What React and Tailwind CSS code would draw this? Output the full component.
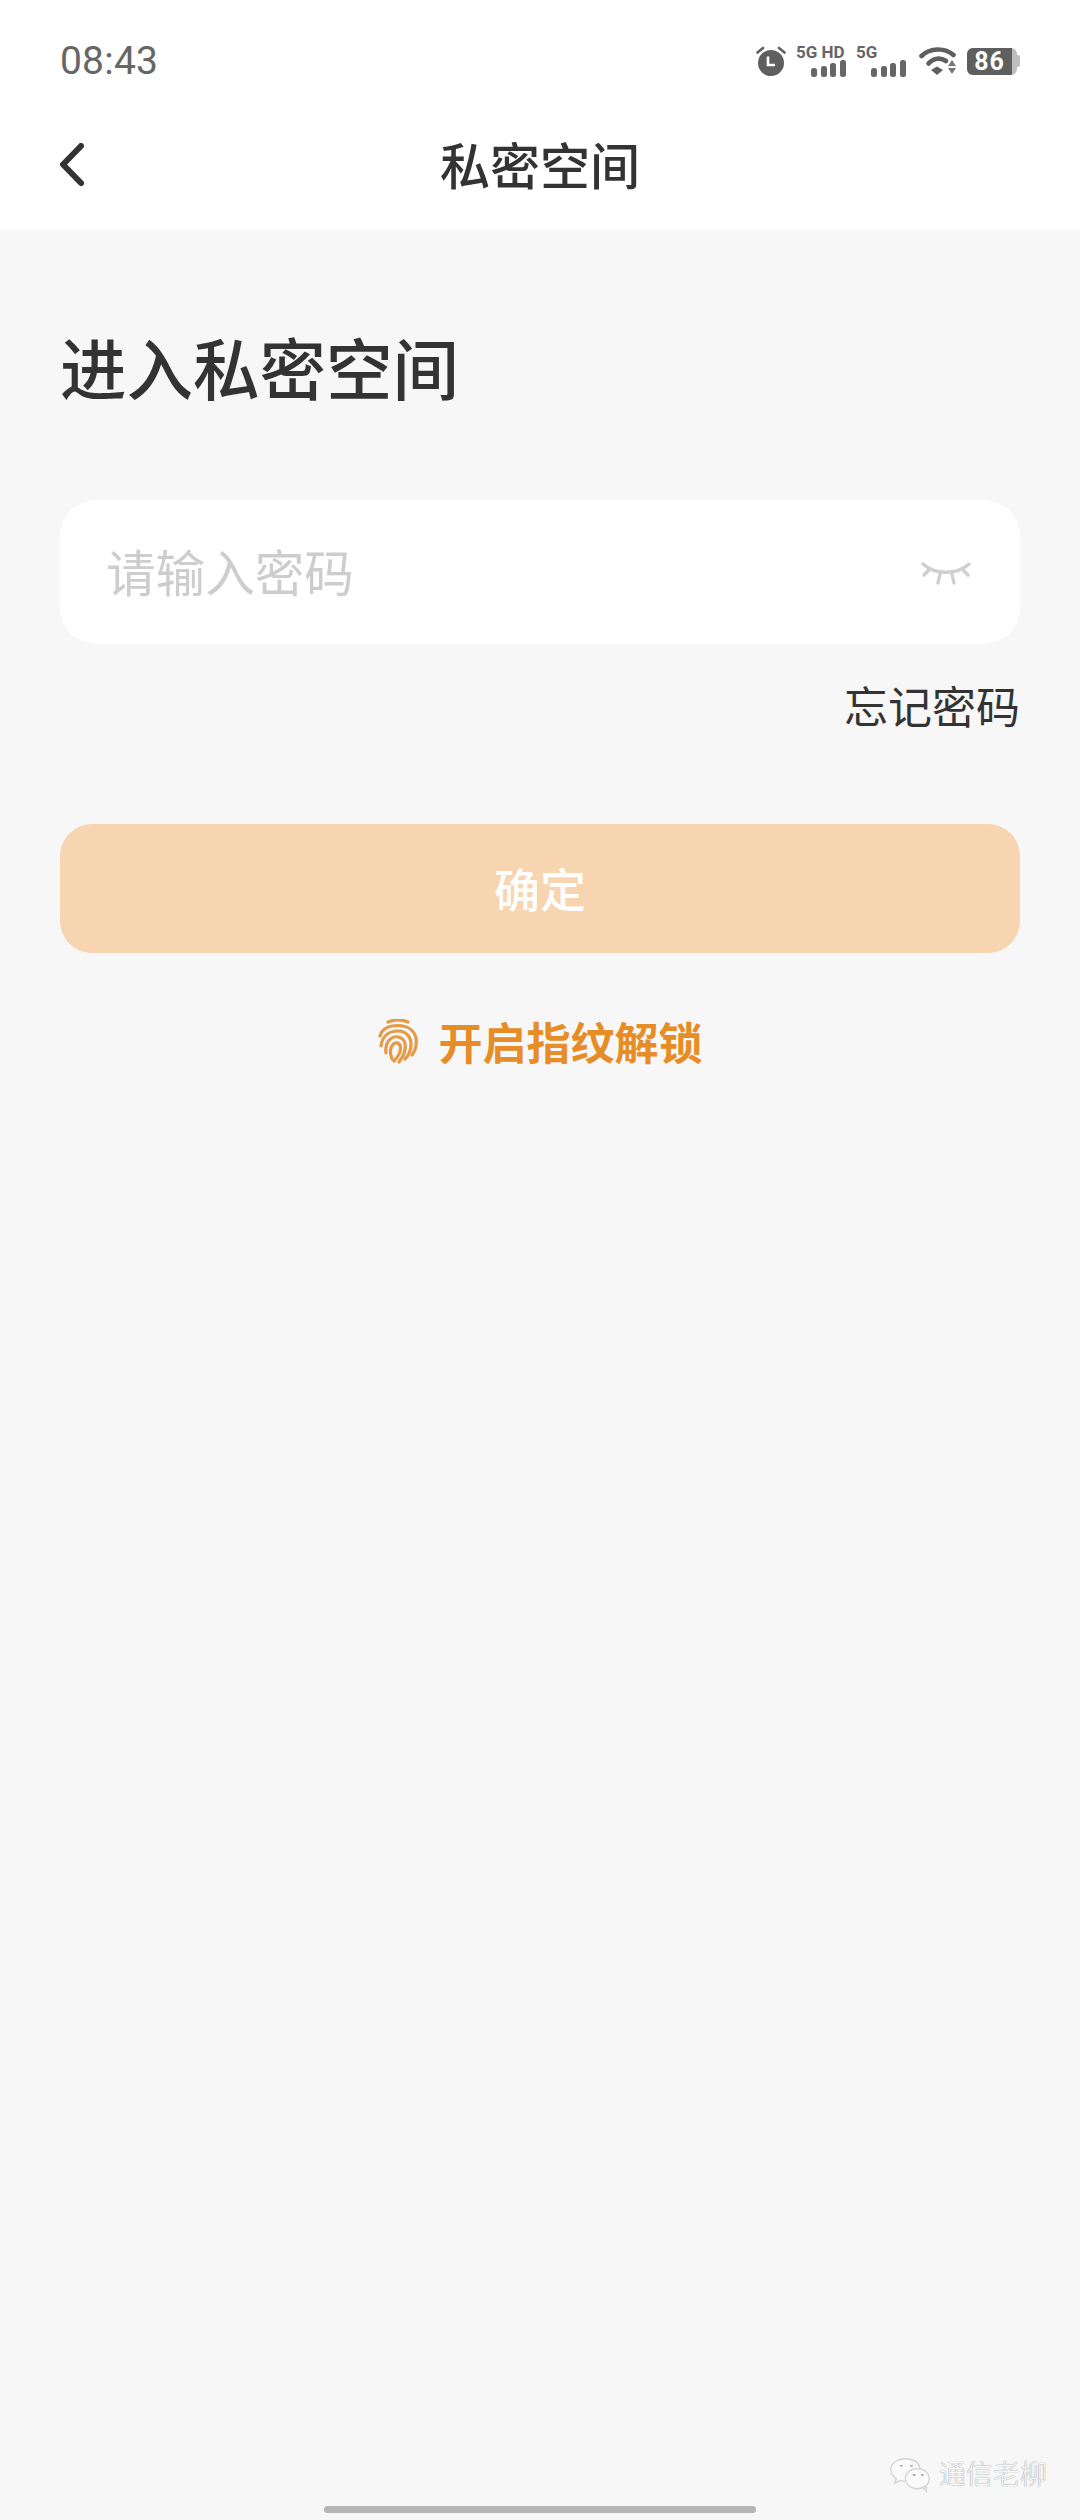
import React from "react";

const CJK = "font-['Roboto','Noto_Sans_CJK_SC',sans-serif]";

const AlarmIcon = () => (
    <svg width="30" height="32" viewBox="0 0 30 32" fill="none">
        <circle cx="15" cy="18" r="13" fill="#5f5f5f" />
        <path d="M12 11.5V20H19" stroke="#fff" strokeWidth="2.6" />
        <path d="M1.5 7.5L7 3M28.5 7.5L23 3" stroke="#5f5f5f" strokeWidth="2.6" strokeLinecap="round" />
    </svg>
);

const SignalBars = () => (
    <svg width="35" height="17" viewBox="0 0 35 17" fill="#666">
        <rect x="0" y="8" width="6" height="9" rx="2.5" />
        <rect x="10" y="6" width="6" height="11" rx="2.5" />
        <rect x="19" y="3" width="6" height="14" rx="2.5" />
        <rect x="29" y="0" width="6" height="17" rx="2.5" />
    </svg>
);

const WifiIcon = () => (
    <svg width="38" height="30" viewBox="0 0 38 30" fill="none">
        <path d="M2.5 10C11 1.5 26 1.5 34.5 9" stroke="#5f5f5f" strokeWidth="4.6" strokeLinecap="round" />
        <path d="M9.5 17.5C14.5 11.5 22 11.5 27 15" stroke="#5f5f5f" strokeWidth="4.6" strokeLinecap="round" />
        <path d="M12 24L18 20.5L24 24L18 29Z" fill="#5f5f5f" />
        <path d="M33 14L37 20H29Z M29 22H37L33 28Z" fill="#777" />
    </svg>
);

const Battery = () => (
    <div className="flex items-center">
        <div className="flex h-[27px] w-[50px] items-center rounded-[6px] bg-[#bdbdbd]">
            <div className="flex h-full w-[45px] items-center justify-center rounded-l-[6px] bg-[#5f5f5f] font-['Roboto',sans-serif] text-[25px] leading-none font-bold tracking-[1px] text-white">
                86
            </div>
        </div>
        <div className="h-[12px] w-[3px] rounded-r-[2px] bg-[#bdbdbd]" />
    </div>
);

const EyeClosed = () => (
    <svg width="50" height="24" viewBox="0 0 50 24" fill="none" stroke="#cfcfcf" strokeWidth="3.4" strokeLinecap="round">
        <path d="M2 2C14 13 36 13 48 2" />
        <path d="M8 8L3 13M19 12L17 21M31 12L33 21M42 8L47 13" />
    </svg>
);

const Fingerprint = () => (
    <svg width="40" height="46" viewBox="0 0 40 46" fill="none" stroke="#e69a45" strokeWidth="3.2" strokeLinecap="round">
        <path d="M10 3C16 0.5 24 0.5 30 3" />
        <path d="M2 17C4 10 11 6.5 20 6.5C29 6.5 36 11 38 19C39 26 37 32 34 36" />
        <path d="M3 27C4 18 10 12 20 12C28 12 33 18 33 25C33 31 31 36 27 40" />
        <path d="M8 34C7 28 9 22 13 19.5C18 16 25 18 27 24C28.5 31 25 38 21 43" />
        <path d="M14 40C12 35 12 29 15 25.5C18 22.5 22 24 22.5 28C23 33 20 38 16 42" />
    </svg>
);

const WechatMark = () => (
    <svg width="42" height="38" viewBox="0 0 46 40" fill="none" stroke="#d4d4d4" strokeWidth="1.5">
        <path d="M24 3C12 0 2 6 2 14C2 19 5 22 8 24L6 29L13 26C15 27 16 27 18 27" fill="#fafafa" />
        <path d="M24 3C30 4 33 8 34 13" />
        <ellipse cx="31" cy="24" rx="13" ry="11" fill="#fafafa" />
        <path d="M37 34L41 38L40 31" />
        <path d="M12 10h3M23 10h3M26 20h3M35 20h3" stroke="#999" />
    </svg>
);

const App = () => {
    return (
        <div className={`flex h-[2520px] w-[1080px] flex-col overflow-hidden bg-[#f7f7f7] ${CJK}`}>
            {/* Status bar + title bar */}
            <header className="h-[230px] bg-white">
                <div className="flex h-[122px] items-center justify-between px-[60px] pb-0">
                    <span className="pt-[1px] font-['Roboto',sans-serif] text-[39px] leading-none tracking-[0.2px] text-[#666]">08:43</span>
                    <div className="flex items-center">
                        <AlarmIcon />
                        <div className="ml-[10px] flex w-[50px] flex-col items-end">
                            <span className="self-start font-['Roboto',sans-serif] text-[17px] leading-[15px] font-bold whitespace-nowrap text-[#666]">5G HD</span>
                            <SignalBars />
                        </div>
                        <div className="ml-[10px] flex w-[50px] flex-col items-end">
                            <span className="self-start font-['Roboto',sans-serif] text-[17px] leading-[15px] font-bold text-[#666]">5G</span>
                            <SignalBars />
                        </div>
                        <div className="ml-[13px]"><WifiIcon /></div>
                        <div className="ml-[10px]"><Battery /></div>
                    </div>
                </div>
                <div className="relative flex h-[84px] items-center justify-center">
                    <svg className="absolute top-[21px] left-[60px]" width="24" height="44" viewBox="0 0 24 44" fill="none" stroke="#333" strokeWidth="6" strokeLinecap="round" strokeLinejoin="round">
                        <path d="M21 3L3 21.5L21 40" />
                    </svg>
                    <h1 className="pt-[8px] text-[50px] leading-none font-medium text-[#333]">私密空间</h1>
                </div>
            </header>

            <main className="flex flex-1 flex-col px-[60px]">
                <h2 className="mt-[107px] text-[66.5px] leading-[70px] font-medium text-[#333]">进入私密空间</h2>

                <div className="mt-[93px] flex h-[144px] items-center justify-between rounded-[36px] bg-white pr-[49px] pl-[46px]">
                    <span className="pt-[7px] text-[49.6px] leading-none text-[#cdcdcd]">请输入密码</span>
                    <div className="pt-[3px]"><EyeClosed /></div>
                </div>

                <div className="mt-[43px] flex justify-end">
                    <span className="text-[44px] leading-[44px] text-[#333]">忘记密码</span>
                </div>

                <button className="mt-[93px] flex h-[129px] items-center justify-center rounded-[32px] bg-[#f7d5b0] pt-[6px] text-[46px] font-medium text-white">
                    确定
                </button>

                <div className="mt-[62px] flex items-center justify-center gap-[21px]">
                    <Fingerprint />
                    <span className="pt-[6px] text-[44px] leading-[48px] font-bold text-[#e78d27]">开启指纹解锁</span>
                </div>
            </main>

            {/* Watermark + home indicator */}
            <div className="flex items-center justify-end gap-[8px] pr-[33px]">
                <WechatMark />
                <span className="text-[27px] leading-none font-light text-[#fafafa] [text-shadow:0_0_1px_#666]">通信老柳</span>
            </div>
            <div className="mx-auto mt-[12px] mb-[7px] h-[7px] w-[432px] rounded-full bg-[#b5b5b5]" />
        </div>
    );
};

export default App;
